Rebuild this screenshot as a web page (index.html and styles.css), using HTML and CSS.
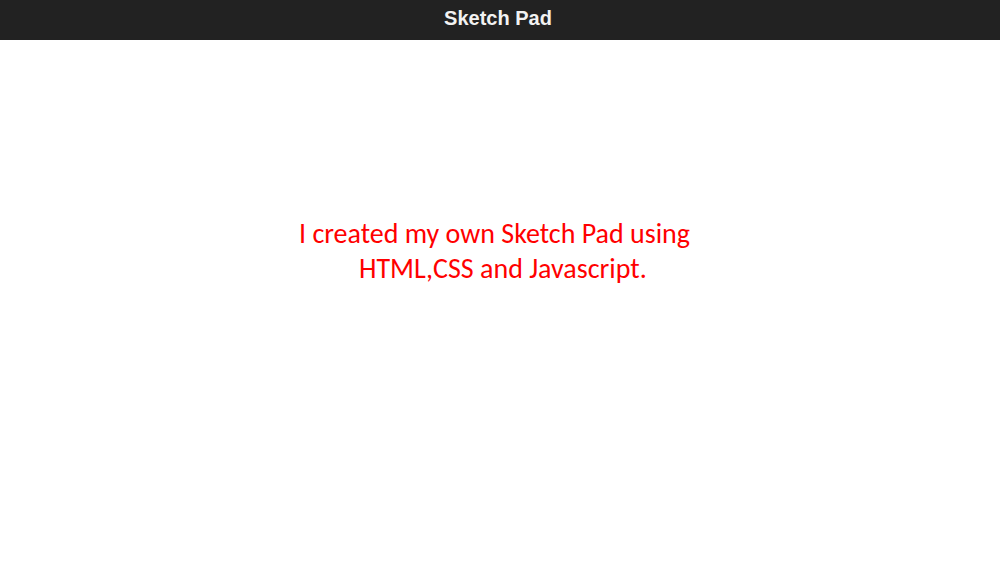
FILE: index.html
```html
<!DOCTYPE html>
<html>
<head>
<meta charset="utf-8">
<link rel="stylesheet" href="styles.css">
</head>
<body>
<header class="topbar"><h1 class="title">Sketch Pad</h1></header>
<main class="pad">
  <div class="note">
    <p class="line">I created my own Sketch Pad using</p>
    <p class="line line-indent">HTML,CSS and Javascript.</p>
  </div>
</main>
</body>
</html>
```
FILE: styles.css
```css
html, body { margin: 0; padding: 0; background: #fff; }
body { width: 1000px; height: 562px; overflow: hidden; }
.topbar {
  height: 40px;
  box-sizing: border-box;
  padding: 0 4px 4px 0;
  background: #222222;
  display: flex;
  align-items: center;
  justify-content: center;
}
.title {
  margin: 0;
  font-family: "Liberation Sans", Arial, sans-serif;
  font-weight: bold;
  font-size: 20px;
  color: #f2f2f2;
}
.pad {
  padding: 176px 0 0 299px;
}
.note {
  font-family: Carlito, "Open Sans", sans-serif;
  font-size: 28px;
  color: #ff0000;
  line-height: 35px;
}
.line { margin: 0; white-space: nowrap; }
.line-indent { padding-left: 60px; }
```
